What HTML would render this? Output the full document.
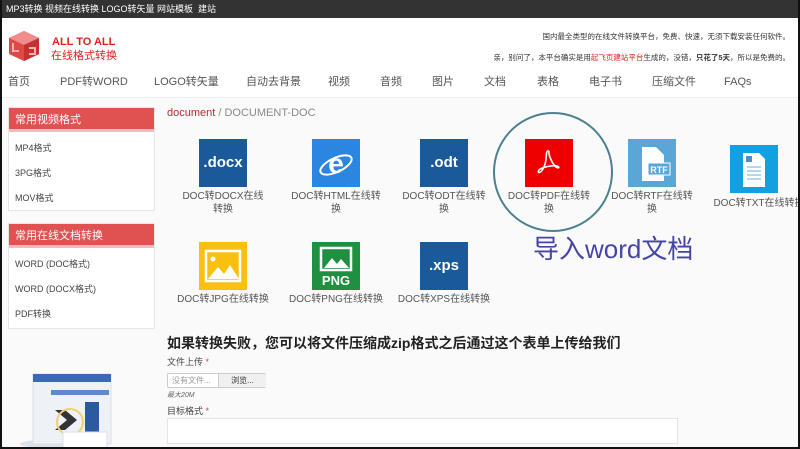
<!DOCTYPE html>
<html><head><meta charset="utf-8"><style>
*{margin:0;padding:0;box-sizing:border-box}
body{width:800px;height:449px;overflow:hidden;background:#fafafa;font-family:"Liberation Sans","Noto Sans CJK SC",sans-serif;position:relative;color:#333}
.a{position:absolute;white-space:nowrap}
.frame{position:absolute;left:0;top:0;width:800px;height:449px;border:2px solid #111;border-top:none;pointer-events:none}
.top{left:0;top:0;width:800px;height:18px;background:#333;color:#fff;font-size:9px;line-height:18px;padding-left:6px}
.hdr{left:0;top:18px;width:800px;height:80px;background:#fff;border-bottom:1px solid #eee}
.nav{font-size:11px;color:#555;top:75px;line-height:15px}
.side{left:8px;width:147px;background:#fff;border:1px solid #e6e6e6}
.sh{background:#e05252;color:#fff;font-size:11px;height:24px;line-height:24px;padding-left:6px;border-bottom:3px solid #f3bcbc}
.si{font-size:9px;color:#444;height:25px;line-height:25px;padding-left:6px}
.ic{width:48px;height:48px;color:#fff;font-weight:bold;font-size:15px;text-align:center;line-height:48px}
.lb{font-size:10px;color:#555;text-align:center;width:90px;line-height:13px;white-space:normal;word-break:break-all}
</style></head><body>
<div class="a top">MP3转换 视频在线转换 LOGO转矢量 网站模板 &nbsp;建站</div>
<div class="a hdr"></div>
<svg class="a" style="left:7px;top:29px" width="34" height="34" viewBox="0 0 34 34"><polygon points="17,2 32,9 32,25 17,32 2,25 2,9" fill="#e04848"/><polygon points="17,2 32,9 17,16 2,9" fill="#f08c8c"/><polygon points="17,16 32,9 32,25 17,32" fill="#c83030"/><path d="M6 14v8h6M22 19h6v6h-6" stroke="#f7b0b0" stroke-width="2" fill="none"/></svg>
<div class="a" style="left:52px;top:36px;font-size:11px;font-weight:bold;color:#e02020">ALL TO ALL</div>
<div class="a" style="left:51px;top:47px;font-size:11px;color:#e02020">在线格式转换</div>
<div class="a" style="right:10px;top:31px;font-size:7.5px;color:#333">国内最全类型的在线文件转换平台，免费、快速，无须下载安装任何软件。</div>
<div class="a" style="right:10px;top:52px;font-size:7.5px;color:#333">亲，别问了，本平台确实是用<span style="color:#e02020">起飞页建站平台</span>生成的，没错，<b>只花了5天</b>，所以是免费的。</div>
<div class="a nav" style="left:8px">首页</div>
<div class="a nav" style="left:60px">PDF转WORD</div>
<div class="a nav" style="left:154px">LOGO转矢量</div>
<div class="a nav" style="left:246px">自动去背景</div>
<div class="a nav" style="left:328px">视频</div>
<div class="a nav" style="left:380px">音频</div>
<div class="a nav" style="left:432px">图片</div>
<div class="a nav" style="left:484px">文档</div>
<div class="a nav" style="left:537px">表格</div>
<div class="a nav" style="left:589px">电子书</div>
<div class="a nav" style="left:652px">压缩文件</div>
<div class="a nav" style="left:724px">FAQs</div>

<div class="a side" style="top:107px;height:104px"><div class="sh">常用视频格式</div><div class="si" style="margin-top:4px">MP4格式</div><div class="si">3PG格式</div><div class="si">MOV格式</div></div>
<div class="a side" style="top:223px;height:106px"><div class="sh">常用在线文档转换</div><div class="si" style="margin-top:4px">WORD (DOC格式)</div><div class="si">WORD (DOCX格式)</div><div class="si">PDF转换</div></div>

<div class="a" style="left:167px;top:107px;font-size:11px;color:#888"><span style="color:#b03030">document</span> / DOCUMENT-DOC</div>

<div class="a ic" style="left:199px;top:139px;background:#1a5a9a">.docx</div>
<div class="a ic" style="left:312px;top:139px;background:#2a86e0"><svg width="48" height="48" viewBox="0 0 48 48"><ellipse cx="24" cy="26" rx="17" ry="7" fill="none" stroke="#fff" stroke-width="2" transform="rotate(-25 24 26)"/><text x="24" y="34" text-anchor="middle" font-size="28" font-weight="bold" fill="#fff" font-family="Liberation Sans">e</text></svg></div>
<div class="a ic" style="left:420px;top:139px;background:#1a5a9a">.odt</div>
<div class="a ic" style="left:525px;top:139px;background:#ee0000"><svg width="48" height="48" viewBox="0 0 48 48"><path d="M23 12c-3 0 0 10 -5 18c-3 5-6 4-4 1c3-3 14-5 18-4c3 1 2 3-1 1c-4-3-7-12-7-14c0-2 0-2-1-2z" fill="none" stroke="#fff" stroke-width="1.6"/></svg></div>
<div class="a ic" style="left:628px;top:139px;background:#5aa6d6"><svg width="48" height="48" viewBox="0 0 48 48"><path d="M14 8h14l8 8v26H14z" fill="#fff"/><rect x="20" y="24" width="22" height="12" fill="#5aa6d6" stroke="#fff"/><text x="31" y="34" text-anchor="middle" font-size="9" fill="#fff" font-family="Liberation Sans">RTF</text></svg></div>
<div class="a ic" style="left:730px;top:145px;background:#12a0e0"><svg width="48" height="48" viewBox="0 0 48 48"><path d="M13 8h16l6 6v28H13z" fill="#fff"/><path d="M17 22h14M17 26h14M17 30h14M17 34h14" stroke="#6aaee0"/><rect x="16" y="11" width="6" height="6" fill="#4a90d0"/></svg></div>
<div class="a lb" style="left:178px;top:190px">DOC转DOCX在线转换</div>
<div class="a lb" style="left:291px;top:190px">DOC转HTML在线转换</div>
<div class="a lb" style="left:399px;top:190px">DOC转ODT在线转换</div>
<div class="a lb" style="left:504px;top:190px">DOC转PDF在线转换</div>
<div class="a lb" style="left:607px;top:190px">DOC转RTF在线转换</div>
<div class="a lb" style="left:699px;top:197px;width:120px">DOC转TXT在线转换</div>

<div class="a ic" style="left:199px;top:242px;background:#fbbf10"><svg width="48" height="48" viewBox="0 0 48 48"><rect x="7" y="9" width="34" height="30" fill="none" stroke="#fff" stroke-width="2.5"/><circle cx="14" cy="17" r="2.5" fill="#fff"/><path d="M9 37l10-12 6 7 6-9 9 14z" fill="#fff"/></svg></div>
<div class="a ic" style="left:312px;top:242px;background:#1e9040"><svg width="48" height="48" viewBox="0 0 48 48"><rect x="9" y="6" width="30" height="22" fill="none" stroke="#fff" stroke-width="2.5"/><path d="M12 26l8-10 5 6 4-5 8 9z" fill="#fff"/><text x="24" y="43" text-anchor="middle" font-size="13" font-weight="bold" fill="#fff" font-family="Liberation Sans">PNG</text></svg></div>
<div class="a ic" style="left:420px;top:242px;background:#1a5a9a">.xps</div>
<div class="a lb" style="left:163px;top:293px;width:120px">DOC转JPG在线转换</div>
<div class="a lb" style="left:276px;top:293px;width:120px">DOC转PNG在线转换</div>
<div class="a lb" style="left:384px;top:293px;width:120px">DOC转XPS在线转换</div>

<div class="a" style="left:493px;top:112px;width:120px;height:120px;border:2px solid #4a8090;border-radius:50%"></div>
<div class="a" style="left:533px;top:229px;font-size:26px;color:#4545a5">导入word文档</div>

<div class="a" style="left:167px;top:333px;font-size:14px;font-weight:bold;color:#222">如果转换失败，您可以将文件压缩成zip格式之后通过这个表单上传给我们</div>
<div class="a" style="left:167px;top:355px;font-size:9px;color:#444">文件上传 <span style="color:#e04040">*</span></div>
<div class="a" style="left:167px;top:373px;width:99px;height:15px;border:1px solid #ccc;border-radius:2px;background:#fff;font-size:8px;line-height:13px"><span style="color:#999;padding-left:4px">没有文件...</span><span style="position:absolute;left:50px;top:0;width:48px;height:13px;background:#f0f0f0;border-left:1px solid #ccc;text-align:center">浏览...</span></div>
<div class="a" style="left:167px;top:390px;font-size:7px;color:#666;font-style:italic">最大20M</div>
<div class="a" style="left:167px;top:404px;font-size:9px;color:#444">目标格式 <span style="color:#e04040">*</span></div>
<div class="a" style="left:167px;top:418px;width:511px;height:26px;border:1px solid #e4e4e4;background:#fff"></div>

<svg class="a" style="left:15px;top:362px" width="100" height="87" viewBox="0 0 100 87"><ellipse cx="45" cy="82" rx="40" ry="5" fill="#dde2ea"/><rect x="18" y="12" width="78" height="70" fill="#eef1f6" stroke="#d8dde6"/><rect x="18" y="12" width="78" height="8" fill="#3a6ab0"/><rect x="36" y="28" width="58" height="5" fill="#5a8ad0"/><path d="M40 48l12 10-12 10h10l12-10-12-10z" fill="#333"/><rect x="70" y="40" width="14" height="30" fill="#2b5aa0"/><circle cx="55" cy="60" r="13" fill="none" stroke="#f0d070" stroke-width="2"/><rect x="48" y="70" width="44" height="17" fill="#fff" stroke="#dde"/></svg>

<div class="frame"></div>
</body></html>
